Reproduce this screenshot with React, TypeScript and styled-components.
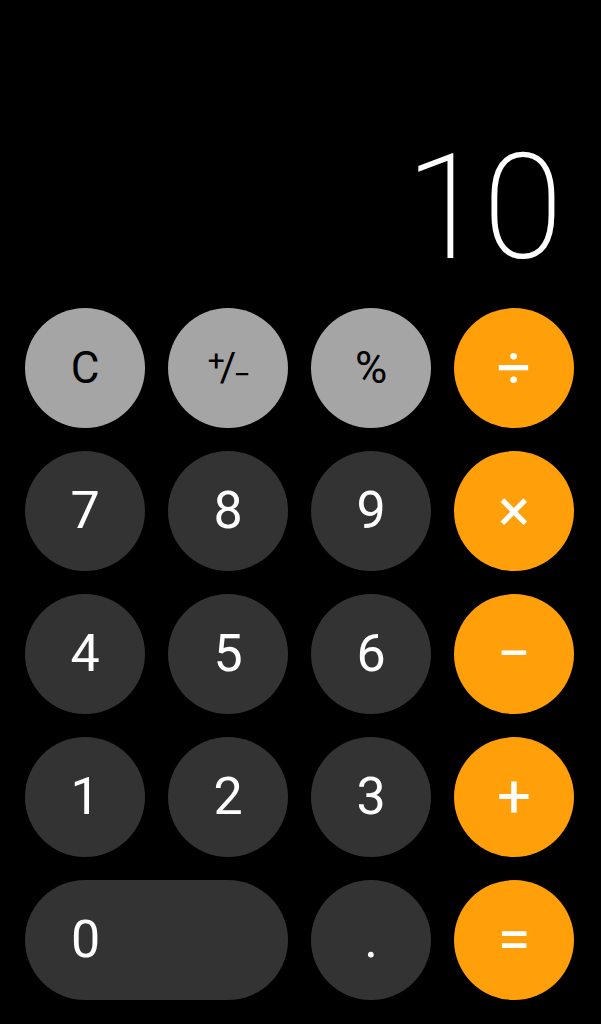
import styled, { createGlobalStyle } from 'styled-components';

const GlobalStyle = createGlobalStyle`
  html, body {
    margin: 0;
    padding: 0;
    background: #000;
  }
  body {
    font-family: Roboto, 'Liberation Sans', sans-serif;
  }
`;

type Kind = 'fn' | 'num' | 'op';

interface Key {
  label: React.ReactNode;
  kind: Kind;
  wide?: boolean;
}

const buildKeys = (): Key[] => [
  { label: 'C', kind: 'fn' },
  {
    label: (
      <PlusMinus>
        <sup>+</sup>/<sub>−</sub>
      </PlusMinus>
    ),
    kind: 'fn',
  },
  { label: '%', kind: 'fn' },
  { label: '÷', kind: 'op' },
  { label: '7', kind: 'num' },
  { label: '8', kind: 'num' },
  { label: '9', kind: 'num' },
  { label: '×', kind: 'op' },
  { label: '4', kind: 'num' },
  { label: '5', kind: 'num' },
  { label: '6', kind: 'num' },
  { label: '−', kind: 'op' },
  { label: '1', kind: 'num' },
  { label: '2', kind: 'num' },
  { label: '3', kind: 'num' },
  { label: '+', kind: 'op' },
  { label: '0', kind: 'num', wide: true },
  { label: '.', kind: 'num' },
  { label: '=', kind: 'op' },
];

const App = () => {
  const keys = buildKeys();
  return (
    <>
      <GlobalStyle />
      <Screen>
        <Display>10</Display>
        <Pad>
          {keys.map((key, index) => (
            <Button key={index} $kind={key.kind} $wide={key.wide}>
              {key.label}
            </Button>
          ))}
        </Pad>
      </Screen>
    </>
  );
};

export default App;

const Screen = styled.div`
  width: 601px;
  height: 1024px;
  box-sizing: border-box;
  padding: 0 27px 24px 25px;
  display: flex;
  flex-direction: column;
  justify-content: flex-end;
  background: #000;
`;

const Display = styled.div`
  color: #fff;
  font-family: Roboto, 'Liberation Sans', sans-serif;
  font-weight: 200;
  font-size: 146px;
  line-height: 146px;
  text-align: right;
  padding-right: 14px;
  margin-bottom: 26px;
  letter-spacing: -3px;
`;

const Pad = styled.div`
  display: grid;
  grid-template-columns: repeat(4, 120px);
  grid-auto-rows: 120px;
  gap: 23px;
`;

const colors: Record<Kind, { bg: string; fg: string }> = {
  fn: { bg: '#a5a5a5', fg: '#000' },
  num: { bg: '#333333', fg: '#fff' },
  op: { bg: '#ff9f0a', fg: '#fff' },
};

const Button = styled.div<{ $kind: Kind; $wide?: boolean }>`
  grid-column: ${({ $wide }) => ($wide ? 'span 2' : 'span 1')};
  border-radius: 60px;
  background: ${({ $kind }) => colors[$kind].bg};
  color: ${({ $kind }) => colors[$kind].fg};
  display: flex;
  align-items: center;
  justify-content: ${({ $wide }) => ($wide ? 'flex-start' : 'center')};
  padding-left: ${({ $wide }) => ($wide ? '46px' : '0')};
  font-family: Roboto, 'Liberation Sans', sans-serif;
  font-size: ${({ $kind }) => ($kind === 'op' ? '60px' : $kind === 'fn' ? '44px' : '52px')};
  font-weight: ${({ $kind }) => ($kind === 'op' ? 400 : 400)};
  line-height: 1;
`;

const PlusMinus = styled.span`
  font-size: 40px;
  display: inline-flex;
  align-items: center;
  sup,
  sub {
    font-size: 30px;
    line-height: 1;
  }
  sup {
    transform: translate(5px, -7px);
  }
  sub {
    transform: translate(-3px, 7px);
  }
`;
